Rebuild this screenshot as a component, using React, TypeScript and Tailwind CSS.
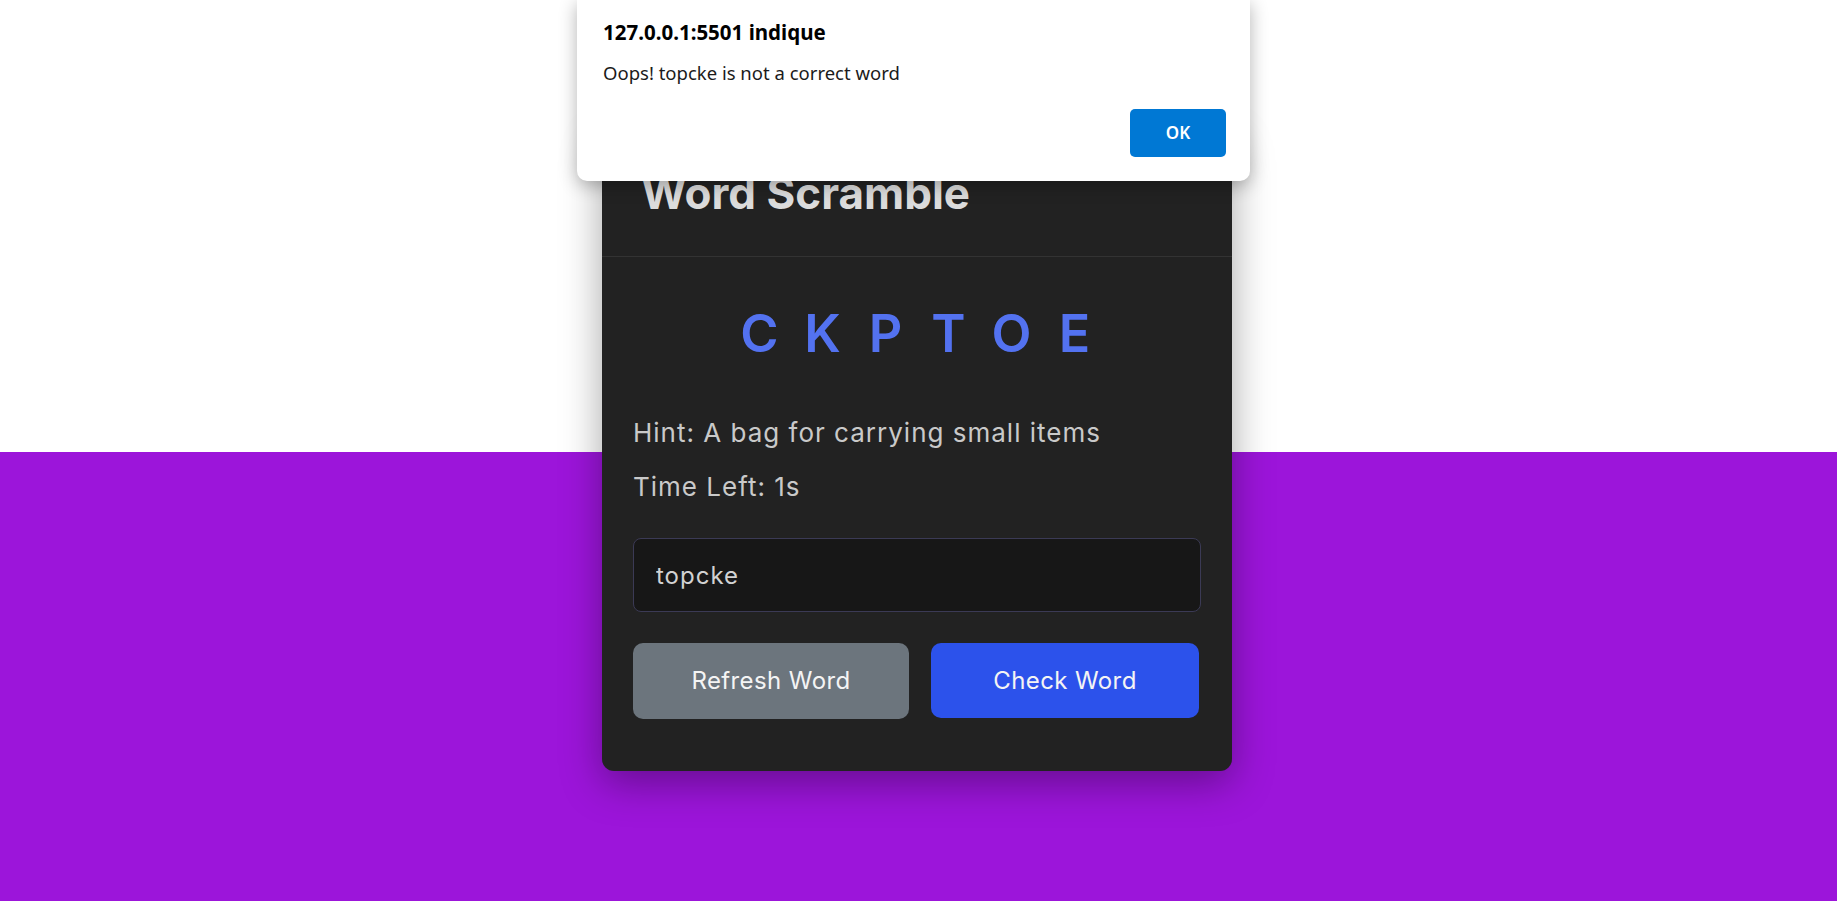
const letters = ["C", "K", "P", "T", "O", "E"];

const AlertBox = () => {
    return (
        <div className="absolute left-[577px] top-0 w-[673px] h-[181px] bg-white rounded-b-[10px] shadow-[0_4px_18px_rgba(0,0,0,0.3)] font-['Noto_Sans',sans-serif] flex flex-col px-[26px] pr-[24px] pb-[24px]">
            <div className="mt-[19px] text-[20.5px] leading-[26px] font-bold text-black">127.0.0.1:5501 indique</div>
            <div className="mt-[16px] text-[18.5px] leading-[24px] text-[#1b1b1b]">Oops! topcke is not a correct word</div>
            <div className="mt-auto flex justify-end">
                <button className="w-[96px] h-[48px] rounded-[5px] bg-[#0078d4] text-white text-[17px] font-semibold">OK</button>
            </div>
        </div>
    );
};

const App = () => {
    return (
        <div className="relative min-h-screen pr-[3px] flex items-center justify-center bg-[linear-gradient(to_bottom,#ffffff_452px,#9c15da_452px)] font-['Inter',sans-serif]">
            <div className="w-[630px] rounded-[12px] bg-[#222222] shadow-[0_12px_40px_rgba(0,0,0,0.35)]">
                <header className="h-[127px] flex items-center px-[39px] border-b border-[#333333]">
                    <h1 className="text-[44px] leading-none font-bold text-[#dcdcdc]">Word Scramble</h1>
                </header>
                <div className="px-[31px] pt-[51px] pb-[52px]">
                    <div className="flex justify-center h-[52px] text-[52px] leading-none font-semibold text-[#5372f0]">
                        {letters.map((l, i) => (
                            <span key={i} className="w-[63px] text-center">
                                {l}
                            </span>
                        ))}
                    </div>
                    <div className="mt-[56px] flex flex-col gap-[20px] text-[26px] leading-[34px] tracking-[1px] text-[#c9c9c9]">
                        <p>Hint: A bag for carrying small items</p>
                        <p>Time Left: 1s</p>
                    </div>
                    <input
                        className="mt-[34px] w-full h-[74px] rounded-[8px] bg-[#171717] border border-[#3b3a55] px-[22px] text-[24px] tracking-[1px] text-[#d2d2d2] outline-none"
                        defaultValue="topcke"
                    />
                    <div className="mt-[31px] flex gap-[22px]">
                        <button className="w-[276px] h-[76px] rounded-[10px] bg-[#6c757d] text-[24px] tracking-[0.4px] text-[#f4f4f4]">Refresh Word</button>
                        <button className="w-[268px] h-[75px] rounded-[10px] bg-[#2c52eb] text-[24px] tracking-[0.4px] text-[#f4f4f4]">Check Word</button>
                    </div>
                </div>
            </div>
            <AlertBox />
        </div>
    );
};

export default App;
